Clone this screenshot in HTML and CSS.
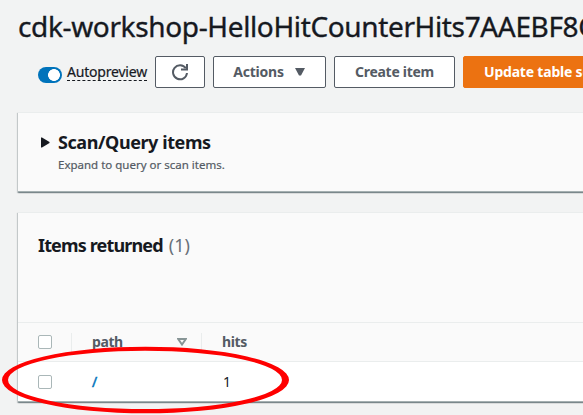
FILE: index.html
```html
<!DOCTYPE html>
<html lang="en">
<head>
<meta charset="utf-8">
<title>DynamoDB items</title>
<link rel="stylesheet" href="styles.css">
</head>
<body>
<main class="page">
  <h1 class="title">cdk-workshop-HelloHitCounterHits7AAEBF8C</h1>
  <div class="toolbar">
    <label class="preview"><span class="toggle"></span><span class="preview-label">Autopreview</span></label>
    <button class="btn refresh" aria-label="Refresh">
      <svg width="18" height="18" viewBox="0 0 18 18"><path d="M16 10A7 7 0 1 1 14.8 5.3" fill="none" stroke="#545b64" stroke-width="2"/><path d="M16 1v5.5h-6" fill="none" stroke="#545b64" stroke-width="2"/></svg>
    </button>
    <button class="btn actions"><span>Actions</span><svg width="12" height="8" viewBox="0 0 12 8"><path d="M1 0h10L7 7.5H5z" fill="#545b64"/></svg></button>
    <button class="btn create">Create item</button>
    <button class="btn update">Update table settings</button>
  </div>
  <section class="panel scan">
    <svg class="caret" width="9" height="11" viewBox="0 0 9 11"><path d="M0 .5h1L8.5 5v1L1 10.5H0z" fill="#16191f"/></svg>
    <div>
      <h2 class="heading scan-heading">Scan/Query items</h2>
      <p class="hint">Expand to query or scan items.</p>
    </div>
  </section>
  <section class="panel items">
    <div class="items-head">
      <h2 class="heading items-heading">Items returned</h2><span class="count">(1)</span>
    </div>
    <div class="row head">
      <span class="check"></span>
      <div class="cell path"><span>path</span><svg width="10" height="8" viewBox="0 0 10 8"><path d="M1.2 1h7.6L5 6.6z" fill="none" stroke="#879596" stroke-width="1.9"/></svg></div>
      <div class="cell hits">hits</div>
    </div>
    <div class="row data">
      <span class="check"></span>
      <div class="cell link">/</div>
      <div class="cell value">1</div>
    </div>
  </section>
  <svg class="mark" width="288" height="68" viewBox="0 0 288 68"><path fill="#fe0000" fill-rule="evenodd" d="M0 34a143.5 33.3 0 1 0 287 0a143.5 33.3 0 1 0-287 0zM6 33.9a137 29.2 0 1 0 274 0a137 29.2 0 1 0-274 0z"/></svg>
</main>
</body>
</html>
```
FILE: styles.css
```css
* { box-sizing: border-box; }
body {
  margin: 0;
  background: #f2f3f3;
  color: #16191f;
  font-family: "Noto Sans", "Open Sans", sans-serif;
}
.page { position: relative; width: 583px; height: 415px; overflow: hidden; padding: 8px 0 0 18px; }
.title { margin: 0; height: 36px; font-size: 28px; line-height: 36px; font-weight: 400; letter-spacing: -0.36px; white-space: nowrap; -webkit-text-stroke: 0.35px #16191f; }
.toolbar { display: flex; align-items: center; height: 32px; margin-top: 12px; padding-left: 20px; }
.preview { display: flex; flex: none; width: 117px; height: 32px; padding-top: 7px; }
.toggle { flex: none; width: 24px; height: 16px; margin: 4px 5px 0 0; border-radius: 8px; background: radial-gradient(circle 7px at 16px 8px, #fff 5.6px, #0073bb 6.2px); }
.preview-label { height: 18px; font-size: 14px; line-height: 18px; letter-spacing: -0.2px; border-bottom: 1px dashed #16191f; white-space: nowrap; -webkit-text-stroke: 0.2px #16191f; }
.btn {
  display: flex; flex: none; align-items: center; justify-content: center;
  height: 32px; margin: 0 8px 0 0; padding: 0;
  border: 1px solid #545b64; border-radius: 2px; background: #fff; color: #545b64;
  font: 700 14px/20px "Noto Sans", sans-serif; letter-spacing: -0.2px; white-space: nowrap;
}
.refresh { width: 50px; }
.actions { width: 113px; gap: 10px; }
.create { width: 121px; letter-spacing: -0.3px; }
.update { width: 193px; justify-content: flex-start; padding-left: 20px; border-color: #ec7211; background: #ec7211; color: #fff; }
.panel { width: 600px; background: #fafafa; box-shadow: 0 1px 1px rgba(0, 28, 36, 0.3), 1px 1px 1px rgba(0, 28, 36, 0.15), -1px 1px 1px rgba(0, 28, 36, 0.15); border-top: 1px solid #eaeded; border-bottom: 1px solid #a5b0b1; }
.scan { display: flex; height: 80px; margin-top: 24px; padding: 18px 0 0 23px; }
.caret { flex: none; margin: 6px 8px 0 0; }
.heading { margin: 0; font-size: 18px; line-height: 22px; font-weight: 700; white-space: nowrap; }
.scan-heading { letter-spacing: -0.42px; }
.hint { margin: 4px 0 0; font-size: 11.5px; line-height: 16px; color: #545b64; -webkit-text-stroke: 0.2px #545b64; }
.items { height: 190px; margin-top: 20px; }
.items-head { display: flex; height: 109px; padding: 21px 0 0 20px; line-height: 22px; gap: 6px; }
.items-heading { letter-spacing: -0.85px; }
.count { font-size: 18px; color: #687078; }
.row { display: flex; align-items: center; padding-left: 20px; }
.head { height: 40px; border-top: 1px solid #eaeded; border-bottom: 1px solid #eaeded; color: #545b64; font-size: 14px; font-weight: 700; letter-spacing: -0.4px; }
.data { height: 39px; background: #fff; font-size: 14px; }
.check { width: 14px; height: 14px; border: 1px solid #aab7b8; border-radius: 2px; background: #fff; }
.cell { line-height: 18px; padding-left: 20px; }
.path { display: flex; align-items: center; justify-content: space-between; width: 130px; margin-left: 19px; padding-right: 14px; border-left: 1px solid #eaeded; }
.hits { border-left: 1px solid #eaeded; }
.head .cell { padding-bottom: 1px; }
.link { width: 130px; margin-left: 20px; color: #0073bb; -webkit-text-stroke: 0.5px #0073bb; }
.value { padding-left: 21px; }
.mark { position: absolute; left: 2px; top: 346px; }
```
